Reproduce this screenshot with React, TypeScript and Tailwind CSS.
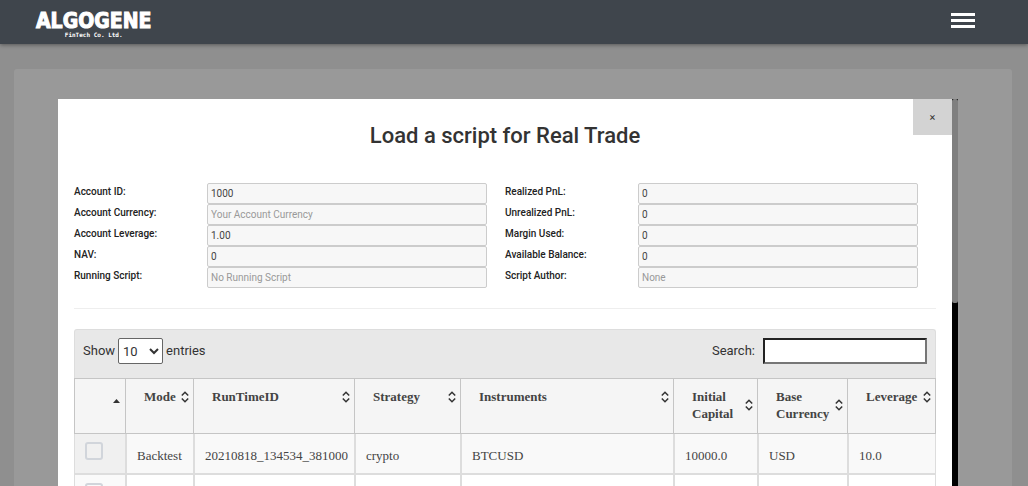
import { useState } from 'react'

type Field = {
  id: string
  label: string
  value?: string
  placeholder?: string
}

type Run = {
  mode: string
  runtimeId: string
  strategy: string
  instruments: string
  capital: string
  currency: string
  leverage: string
}

const accountFields: Field[] = [
  { id: 'account-id', label: 'Account ID:', value: '1000' },
  { id: 'currency', label: 'Account Currency:', placeholder: 'Your Account Currency' },
  { id: 'leverage', label: 'Account Leverage:', value: '1.00' },
  { id: 'nav', label: 'NAV:', value: '0' },
  { id: 'script', label: 'Running Script:', placeholder: 'No Running Script' },
]

const tradeFields: Field[] = [
  { id: 'realized', label: 'Realized PnL:', value: '0' },
  { id: 'unrealized', label: 'Unrealized PnL:', value: '0' },
  { id: 'margin', label: 'Margin Used:', value: '0' },
  { id: 'balance', label: 'Available Balance:', value: '0' },
  { id: 'author', label: 'Script Author:', placeholder: 'None' },
]

const columns = [
  { name: 'Mode', width: 'w-[68px]' },
  { name: 'RunTimeID', width: 'w-[161px]' },
  { name: 'Strategy', width: 'w-[106px]' },
  { name: 'Instruments', width: '' },
  { name: 'Initial Capital', width: 'w-[84px]' },
  { name: 'Base Currency', width: 'w-[90px]' },
  { name: 'Leverage', width: 'w-[88px]' },
]

const runs: Run[] = [
  {
    mode: 'Backtest',
    runtimeId: '20210818_134534_381000',
    strategy: 'crypto',
    instruments: 'BTCUSD',
    capital: '10000.0',
    currency: 'USD',
    leverage: '10.0',
  },
  { mode: '', runtimeId: '', strategy: '', instruments: '', capital: '', currency: '', leverage: '' },
]

function SortIcon() {
  return (
    <svg className="shrink-0" width="8" height="12" viewBox="0 0 8 12" fill="none" stroke="#333" strokeWidth="1.5">
      <path d="M0.8 4.6 4 1.3 7.2 4.6M0.8 7.4 4 10.7 7.2 7.4" />
    </svg>
  )
}

function Header() {
  return (
    <header className="relative flex h-11 shrink-0 items-start justify-between bg-[#3f454c] pl-9 pr-[53px] text-white shadow-[0_1px_4px_rgba(0,0,0,0.4)]">
      <a href="#" className="flex flex-col items-center pt-[11px] font-['DejaVu_Sans_Condensed','DejaVu_Sans',sans-serif]">
        <span className="text-[21px] font-bold leading-5 [-webkit-text-stroke:1px_white]">ALGOGENE</span>
        <span className="font-['DejaVu_Sans_Mono',monospace] text-[6px] font-bold leading-[7px]">FinTech Co. Ltd.</span>
      </a>
      <button aria-label="Menu" className="mt-[13px] flex w-6 flex-col gap-[3px]">
        <span className="h-[3px] w-full bg-white" />
        <span className="h-[3px] w-full bg-white" />
        <span className="h-[3px] w-full bg-white" />
      </button>
    </header>
  )
}

function FieldList({ fields }: { fields: Field[] }) {
  return (
    <div className="pr-[18px]">
      {fields.map((f) => (
        <div key={f.id} className="flex h-[21px] items-start">
          <label htmlFor={f.id} className="flex-1 text-[10px] font-medium leading-[18px] text-[#222]">
            {f.label}
          </label>
          <input
            id={f.id}
            readOnly
            defaultValue={f.value}
            placeholder={f.placeholder}
            className="h-[21px] w-[280px] rounded-[2px] border border-[#ccc] bg-[#f7f7f7] px-[3px] text-[10px] text-[#444] placeholder:text-[#999]"
          />
        </div>
      ))}
    </div>
  )
}

function RunsTable() {
  return (
    <table className="w-full table-fixed border-separate border-spacing-0 text-left font-['Liberation_Serif',serif] text-[13px] text-[#444]">
      <thead className="bg-[#f5f5f5]">
        <tr className="h-14 align-top">
          <th aria-label="Select" className="w-[52px] border border-[#c5c5c5] pr-[5px] pt-5">
            <svg className="ml-auto" width="7" height="4" viewBox="0 0 7 4" fill="#333">
              <path d="M3.5 0 7 4H0z" />
            </svg>
          </th>
          {columns.map((c) => (
            <th key={c.name} className={`border-y border-r border-[#c5c5c5] pl-[18px] pr-1 pt-[9px] ${c.width}`}>
              <div className="flex items-center justify-between leading-[17px]">
                <span>{c.name}</span>
                <SortIcon />
              </div>
            </th>
          ))}
        </tr>
      </thead>
      <tbody>
        {runs.map((r, i) => (
          <tr key={i} className="group h-10 align-top odd:bg-[#f9f9f9] even:bg-white">
            <td className="border-b border-x border-[#ddd] pl-[10px] pt-2 group-odd:bg-[#f0f0f0] group-even:border-t group-even:bg-[#fafafa]">
              <input
                type="checkbox"
                aria-label={`Select run ${i + 1}`}
                className="block size-[18px] appearance-none rounded-[3px] border-2 border-[#d1d5db]"
              />
            </td>
            {[r.mode, r.runtimeId, r.strategy, r.instruments, r.capital, r.currency, r.leverage].map((text, j) => (
              <td key={j} className="whitespace-nowrap border-x border-b border-[#ddd] pl-[10px] pt-[13px] leading-[18px] group-even:border-t">
                {text}
              </td>
            ))}
          </tr>
        ))}
      </tbody>
    </table>
  )
}

export default function App() {
  const [size, setSize] = useState('10')
  const [search, setSearch] = useState('')

  return (
    <div className="flex h-screen flex-col overflow-hidden bg-[#8f8f8f] font-[Roboto,sans-serif]">
      <Header />
      <main className="ml-[14px] mr-4 mt-[25px] flex min-h-0 flex-1 rounded-t-[3px] bg-[#999] pl-11 pr-[54px] pt-[30px]">
        <section role="dialog" aria-labelledby="title" className="relative min-w-0 flex-1 bg-white px-4">
          <button aria-label="Close" className="absolute right-0 top-0 h-9 w-[39px] bg-[#d3d3d3] pt-[2px] text-[11px] text-[#333]">
            ×
          </button>
          <h1 id="title" className="pt-[21px] text-center text-[22px] font-medium leading-8 text-[#333]">
            Load a script for Real Trade
          </h1>
          <form className="mt-[31px] grid grid-cols-2">
            <FieldList fields={accountFields} />
            <FieldList fields={tradeFields} />
          </form>
          <hr className="mb-5 mt-5 border-[#eee]" />
          <div className="flex h-[49px] items-start justify-between rounded-t-[3px] border border-b-0 border-[#ddd] bg-[#e8e8e8] px-2 pt-2 text-[13px] text-[#333]">
            <label className="flex items-center gap-[3px]">
              Show
              <select
                value={size}
                onChange={(e) => setSize(e.target.value)}
                className="h-[26px] w-[45px] rounded-[2px] border border-[#666] bg-white"
              >
                <option>10</option>
                <option>25</option>
                <option>50</option>
              </select>
              entries
            </label>
            <label className="flex items-center gap-2">
              Search:
              <input
                type="search"
                value={search}
                onChange={(e) => setSearch(e.target.value)}
                className="h-[26px] w-[164px] border-2 border-[#767676] border-l-[#222] border-t-[#222] bg-white px-1"
              />
            </label>
          </div>
          <RunsTable />
        </section>
        <div className="w-[6px] shrink-0 bg-black">
          <div className="h-[204px] rounded-[2px] bg-[#7f7f7f]" />
        </div>
      </main>
    </div>
  )
}
